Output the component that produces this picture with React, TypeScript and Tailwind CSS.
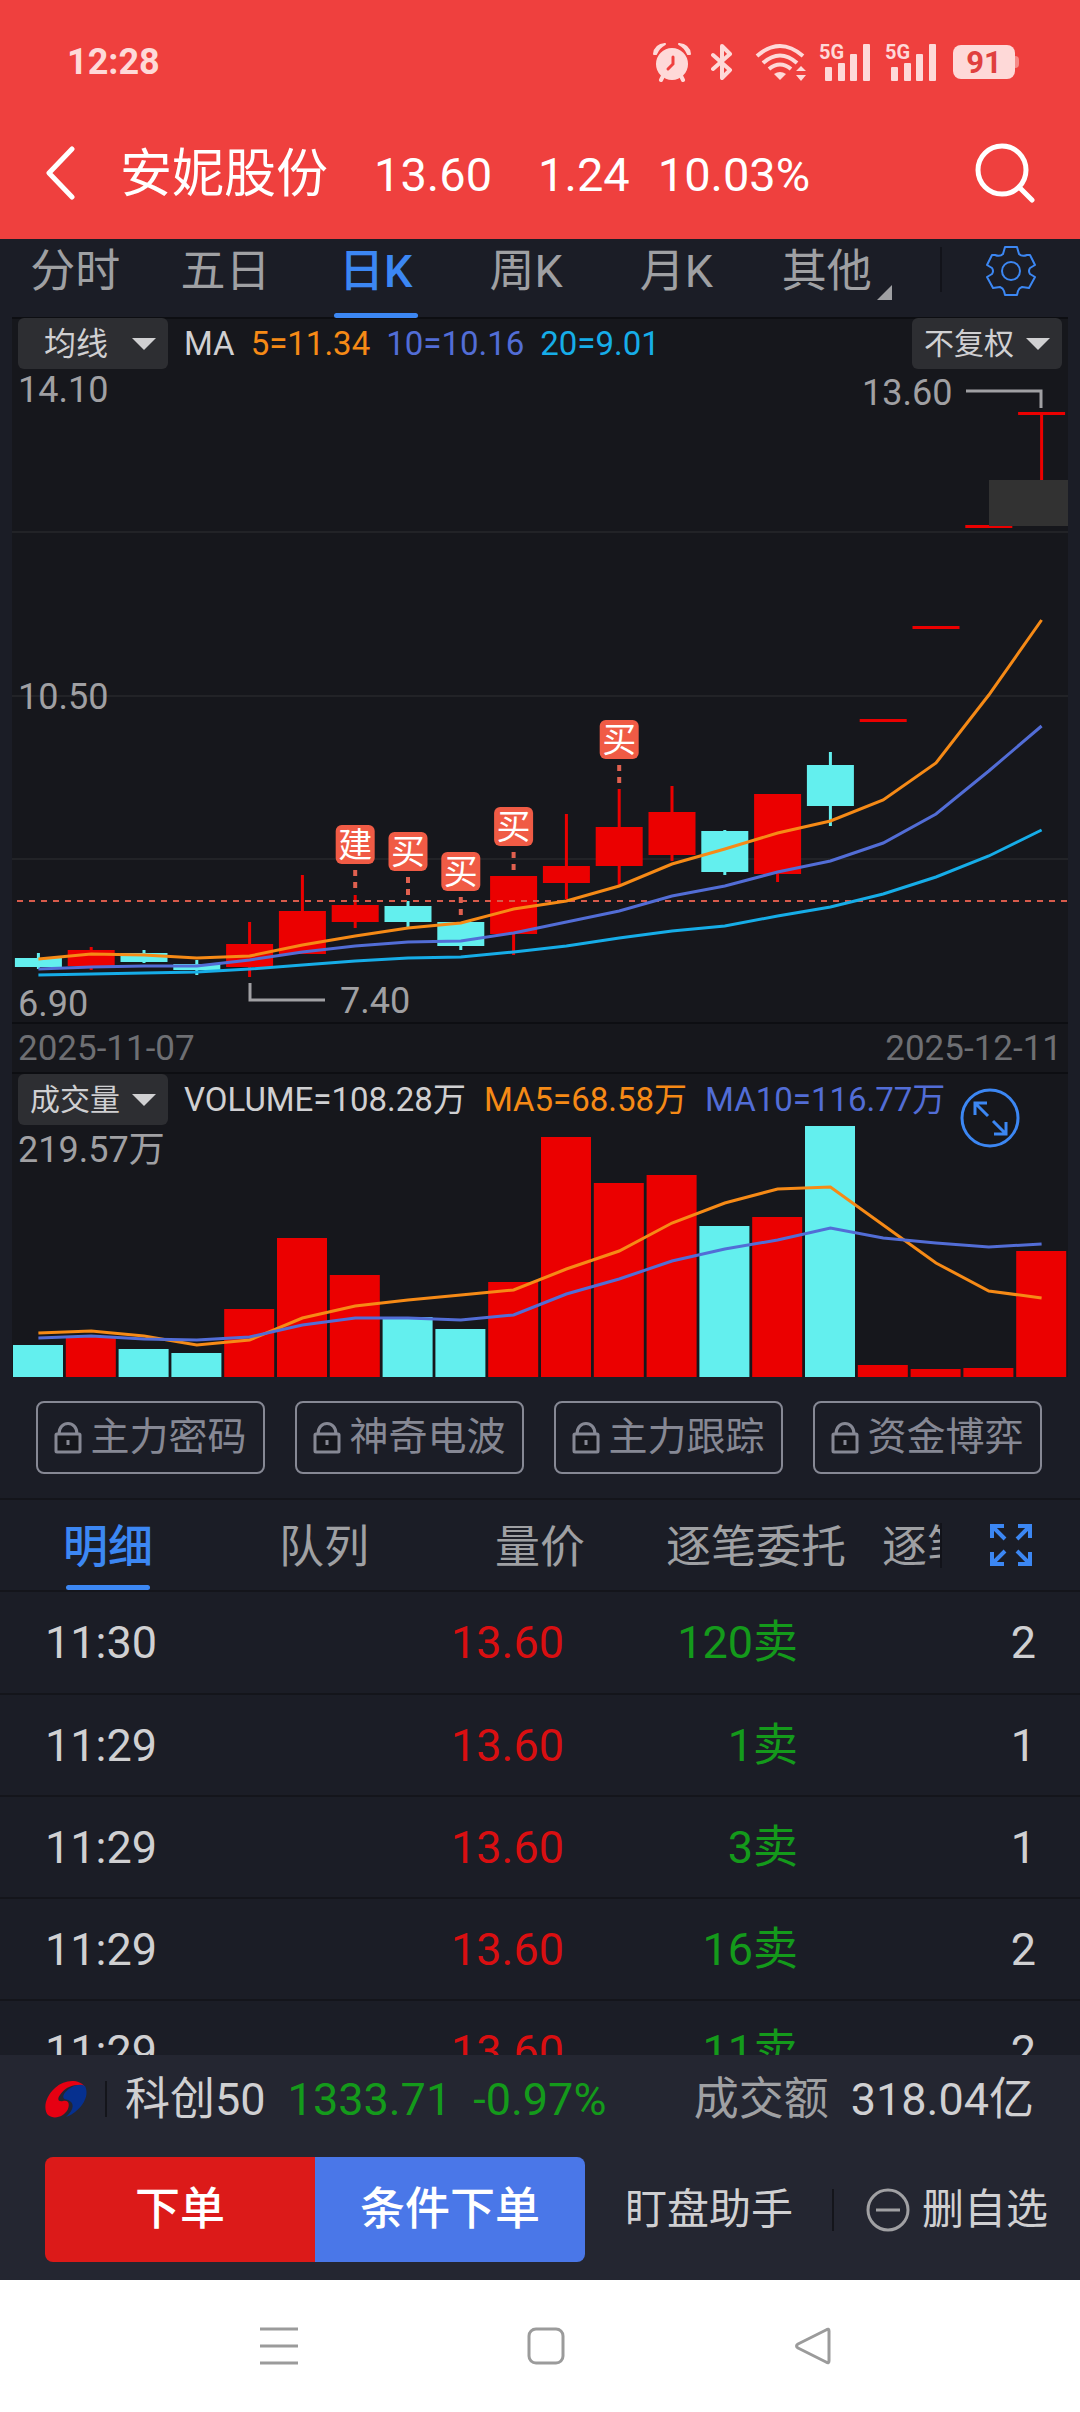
import React from 'react'

const UP = '#eb0000'
const DOWN = '#63efee'

const CHART_WIDTH = 1056
const STEP = CHART_WIDTH / 20
const centerX = (i: number) => STEP * i + STEP / 2

// body edges and wick ends in chart units, plus direction
type Candle = { top: number; bottom: number; high: number; low: number; up: boolean }

const candles: Candle[] = [
  { top: 589, bottom: 598, high: 584, low: 600, up: false },
  { top: 581, bottom: 597, high: 578, low: 601, up: true },
  { top: 584, bottom: 593, high: 581, low: 594, up: false },
  { top: 595, bottom: 601, high: 591, low: 606, up: false },
  { top: 575, bottom: 598, high: 553, low: 608, up: true },
  { top: 542, bottom: 585, high: 506, low: 585, up: true },
  { top: 536, bottom: 553, high: 526, low: 559, up: true },
  { top: 537, bottom: 553, high: 532, low: 558, up: false },
  { top: 553, bottom: 577, high: 553, low: 581, up: false },
  { top: 507, bottom: 565, high: 507, low: 586, up: true },
  { top: 497, bottom: 514, high: 445, low: 530, up: true },
  { top: 458, bottom: 497, high: 420, low: 517, up: true },
  { top: 443, bottom: 486, high: 417, low: 492, up: true },
  { top: 462, bottom: 503, high: 461, low: 506, up: false },
  { top: 425, bottom: 505, high: 425, low: 513, up: true },
  { top: 396, bottom: 437, high: 383, low: 457, up: false },
  { top: 350, bottom: 353, high: 350, low: 353, up: true },
  { top: 257, bottom: 260, high: 257, low: 260, up: true },
  { top: 156, bottom: 159, high: 156, low: 159, up: true },
  { top: 43, bottom: 46, high: 43, low: 112, up: true },
]

const priceLines = [
  { color: '#f68a16', values: [590, 585, 586, 589, 587, 576, 567, 559, 554, 540, 532, 517, 495, 480, 464, 452, 431, 394, 326, 251] },
  { color: '#526dd6', values: [600, 598, 597, 597, 591, 583, 577, 573, 572, 564, 553, 542, 527, 517, 503, 492, 474, 445, 402, 357] },
  { color: '#16ade8', values: [606, 605, 604, 603, 600, 596, 592, 589, 588, 583, 577, 569, 562, 557, 547, 538, 525, 508, 487, 461] },
]

const marks = [
  { index: 6, y: 456, label: '建' },
  { index: 7, y: 463, label: '买' },
  { index: 8, y: 483, label: '买' },
  { index: 9, y: 438, label: '买' },
  { index: 11, y: 351, label: '买' },
]

const volumeTops = [220, 211, 224, 228, 184, 113, 150, 192, 204, 157, 12, 58, 50, 101, 92, 1, 240, 244, 243, 126]

const volumeLines = [
  { color: '#f68a16', values: [208, 206, 211, 220, 215, 193, 181, 175, 170, 165, 144, 126, 98, 78, 64, 62, 100, 138, 166, 173] },
  { color: '#526dd6', values: [213, 211, 214, 215, 212, 200, 193, 193, 195, 190, 169, 154, 136, 124, 115, 103, 113, 118, 122, 119] },
]

const toPoints = (values: number[]) => values.map((v, i) => `${centerX(i)},${v}`).join(' ')

const trades = [
  { time: '11:30', price: '13.60', volume: '120卖', count: 2 },
  { time: '11:29', price: '13.60', volume: '1卖', count: 1 },
  { time: '11:29', price: '13.60', volume: '3卖', count: 1 },
  { time: '11:29', price: '13.60', volume: '16卖', count: 2 },
  { time: '11:29', price: '13.60', volume: '11卖', count: 2 },
]

const SignalIcon = () => (
  <svg viewBox="0 0 52 38" className="w-[52px] h-[38px] overflow-visible" fill="currentColor">
    <text x="0" y="16" fontSize="20" fontWeight="700">5G</text>
    <rect x="6" y="24" width="7" height="14" rx="1" />
    <rect x="19" y="20" width="7" height="18" rx="1" />
    <rect x="31" y="11" width="7" height="27" rx="1" />
    <rect x="44" y="1" width="7" height="37" rx="1" />
  </svg>
)

const StatusBar = () => (
  <div className="h-[124px] pl-[67px] pr-[61px] flex items-center justify-between text-[#fed9d8]">
    <span className="text-[36px] leading-none font-bold">12:28</span>
    <div className="flex items-center">
      <svg viewBox="0 0 38 39" className="w-[38px] h-[39px]" fill="currentColor">
        <circle cx="19" cy="21" r="16" />
        <path d="M1 11 Q2 2 12 1 Q6 4 3 11 Z" stroke="currentColor" strokeWidth="2" strokeLinejoin="round" />
        <path d="M37 11 Q36 2 26 1 Q32 4 35 11 Z" stroke="currentColor" strokeWidth="2" strokeLinejoin="round" />
        <path d="M10 33 L8 37 M28 33 L30 37" stroke="currentColor" strokeWidth="4" strokeLinecap="round" />
        <path d="M20 14 V21 L15 26" stroke="#ef403e" strokeWidth="3" fill="none" strokeLinecap="round" />
      </svg>
      <svg viewBox="0 0 22 38" className="ml-[20px] w-[22px] h-[38px]" fill="none" stroke="currentColor" strokeWidth="4" strokeLinejoin="round" strokeLinecap="round">
        <path d="M2 12 L19 27 L11 35 V3 L19 11 L2 26" />
      </svg>
      <svg viewBox="0 0 52 38" className="ml-[22px] w-[52px] h-[38px]" fill="none" stroke="currentColor" strokeWidth="4">
        <path d="M2 13 Q25 -7 48 13" />
        <path d="M8 20 Q25 5 42 20" />
        <path d="M14 26 Q25 17 36 26" />
        <path d="M19 31 Q25 27 31 31 L25 37 Z" fill="currentColor" stroke="none" />
        <path d="M41 28 L46 23 L51 28 Z M41 32 L46 38 L51 32 Z" fill="currentColor" stroke="none" />
      </svg>
      <span className="ml-3"><SignalIcon /></span>
      <span className="ml-[14px]"><SignalIcon /></span>
      <span className="ml-4 w-[62px] h-[34px] rounded-lg bg-[#fed9d8] text-[#e0403e] text-[31px] leading-none font-bold flex items-center justify-center">91</span>
      <span className="w-1 h-3 rounded-r bg-[#f58a88]" />
    </div>
  </div>
)

const Header = () => (
  <header className="bg-[#ef403e]">
    <StatusBar />
    <div className="h-[115px] pb-[18px] px-[45px] flex items-center text-white">
      <button aria-label="返回">
        <svg viewBox="0 0 30 54" className="w-[30px] h-[54px]" fill="none" stroke="currentColor" strokeWidth="5" strokeLinecap="round" strokeLinejoin="round">
          <path d="M27 3 L4 27 L27 51" />
        </svg>
      </button>
      <h1 className="ml-[45px] mt-1 text-[52px] leading-none">安妮股份</h1>
      <div className="ml-[46px] mt-1 flex text-[47px] leading-none">
        <span>13.60</span>
        <span className="ml-[46px]">1.24</span>
        <span className="ml-7">10.03%</span>
      </div>
      <button aria-label="搜索" className="ml-auto">
        <svg viewBox="0 0 60 60" className="w-[60px] h-[60px]" fill="none" stroke="currentColor" strokeWidth="5" strokeLinecap="round">
          <circle cx="27" cy="27" r="24" />
          <path d="M44 44 L57 57" />
        </svg>
      </button>
    </div>
  </header>
)

const periods = ['分时', '五日', '日K', '周K', '月K', '其他']

const PeriodTabs = () => (
  <nav className="h-[79px] flex text-[45px] leading-none text-[#9fa0a3]">
    <div className="flex-1 grid grid-cols-6">
      {periods.map((name) => (
        <button
          key={name}
          className={name === '日K' ? 'relative pb-[14px] text-[#3c87f3] font-medium' : 'relative pb-[14px]'}
        >
          {name}
          {name === '日K' && <span className="absolute bottom-0 left-1/2 -ml-[42px] w-[84px] h-[5px] rounded-sm bg-[#3c87f3]" />}
          {name === '其他' && (
            <svg viewBox="0 0 15 15" className="absolute right-[10px] bottom-[18px] w-[15px] h-[15px]" fill="currentColor">
              <path d="M15 0 V15 H0 Z" />
            </svg>
          )}
        </button>
      ))}
    </div>
    <span className="ml-[38px] mt-2 w-[2px] h-[45px] bg-[#12131a]" />
    <button aria-label="设置" className="ml-11 mr-11 mt-[7px] self-start text-[#3c87f3]">
      <svg viewBox="0 0 50 50" className="w-[50px] h-[50px]" fill="none" stroke="currentColor" strokeWidth="2" strokeLinejoin="round">
        <path d="M19 1 H31 L33 8 Q36 11 41 9 L44 9 L49 19 L44 22 Q42 25 44 28 L49 31 L43 42 L36 41 Q33 42 32 45 L31 49 H19 L18 45 Q17 42 14 41 L7 42 L1 31 L6 28 Q8 25 6 22 L1 19 L6 9 L9 9 Q14 11 17 8 Z" />
        <circle cx="25" cy="25" r="9" />
      </svg>
    </button>
  </nav>
)

const PickerButton = ({ label, large = false }: { label: string; large?: boolean }) => (
  <button className="w-[150px] h-[51px] shrink-0 rounded-md bg-[#2d2e32] text-[#d0d0d2] flex items-center justify-end pr-3">
    <span className={large ? 'text-[32px] leading-none' : 'text-[30px] leading-none'}>{label}</span>
    <svg viewBox="0 0 24 12" className={large ? 'ml-6 w-6 h-3' : 'ml-3 w-6 h-3'} fill="currentColor">
      <path d="M0 0 H24 L12 12 Z" />
    </svg>
  </button>
)

const PriceChart = () => (
  <svg viewBox="0 0 1056 653" className="block w-full h-auto overflow-visible">
    <g stroke="#222327" strokeWidth="2">
      <path d="M0 163 H1056 M0 327 H1056 M0 490 H1056" />
    </g>
    {candles.map((c, i) => (
      <g key={i} fill={c.up ? UP : DOWN}>
        <rect x={centerX(i) - 1.5} y={c.high} width="3" height={c.low - c.high} />
        <rect x={centerX(i) - 23.5} y={c.top} width="47" height={c.bottom - c.top} />
      </g>
    ))}
    {/* gap zone under the latest candle */}
    <rect x="977" y="111" width="79" height="46" fill="#323232" />
    <path d="M5 532 H1056" stroke="#d95b4b" strokeWidth="2" strokeDasharray="6 6" />
    {priceLines.map((line) => (
      <polyline key={line.color} points={toPoints(line.values)} fill="none" stroke={line.color} strokeWidth="3" />
    ))}
    {marks.map((m) => (
      <g key={m.index}>
        <rect x={centerX(m.index) - 19.5} y={m.y} width="39" height="39" rx="6" fill="#f05b45" />
        <text x={centerX(m.index)} y={m.y + 32} textAnchor="middle" fontSize="34" fill="#fff">{m.label}</text>
        <path d={`M${centerX(m.index)} ${m.y + 45} v20`} stroke="#e0604f" strokeWidth="4" strokeDasharray="6 6" />
      </g>
    ))}
    <g fill="none" stroke="#a0a0a3" strokeWidth="3">
      <path d="M954 22 H1029 V39" />
      <path d="M238 614 V631 H313" />
    </g>
    <g fill="#a0a0a3" fontSize="36">
      <text x="6" y="33">14.10</text>
      <text x="6" y="340">10.50</text>
      <text x="6" y="647">6.90</text>
      <text x="850" y="36">13.60</text>
      <text x="328" y="644">7.40</text>
    </g>
  </svg>
)

const VolumeChart = () => (
  <svg viewBox="0 0 1056 252" className="block w-full h-auto">
    <text x="6" y="37" fontSize="36" fill="#a0a0a3">219.57万</text>
    {volumeTops.map((top, i) => (
      <rect key={i} x={STEP * i + 1} y={top} width="50" height={252 - top} fill={candles[i].up ? UP : DOWN} />
    ))}
    {volumeLines.map((line) => (
      <polyline key={line.color} points={toPoints(line.values)} fill="none" stroke={line.color} strokeWidth="3" />
    ))}
  </svg>
)

const ChartPanel = () => (
  <section className="mx-3 bg-[#16171c] border-t-2 border-[#0d0e12] -mt-px text-[33px] leading-none">
    <div className="-mt-px flex items-center px-[6px]">
      <PickerButton label="均线" large />
      <div className="ml-4 flex gap-4">
        <span className="text-[#d0d0d2]">MA</span>
        <span className="text-[#f68a16]">5=11.34</span>
        <span className="text-[#526dd6]">10=10.16</span>
        <span className="text-[#16ade8]">20=9.01</span>
      </div>
      <div className="ml-auto">
        <PickerButton label="不复权" />
      </div>
    </div>
    <PriceChart />
    <div className="h-[52px] px-[6px] border-y-2 border-[#0d0e12] flex items-center justify-between text-[35px] text-[#6e6f73]">
      <span>2025-11-07</span>
      <span>2025-12-11</span>
    </div>
    <div className="relative flex items-center px-[6px]">
      <PickerButton label="成交量" />
      <div className="ml-4 flex gap-[18px] whitespace-nowrap">
        <span className="text-[#d0d0d2]">VOLUME=108.28万</span>
        <span className="text-[#f68a16]">MA5=68.58万</span>
        <span className="text-[#526dd6]">MA10=116.77万</span>
      </div>
      <button aria-label="展开" className="absolute right-12 top-[14px] text-[#3c87f3]">
        <svg viewBox="0 0 60 60" className="w-[60px] h-[60px]" fill="none" stroke="currentColor" strokeWidth="3">
          <circle cx="30" cy="30" r="28" />
          <path d="M15 27 V15 H27 M15 15 L28 28 M33 33 L46 46 M46 34 V46 H34" />
        </svg>
      </button>
    </div>
    <VolumeChart />
  </section>
)

const LockedButton = ({ label }: { label: string }) => (
  <button className="h-[73px] rounded-lg border-2 border-[#868894] text-[#868894] text-[39px] leading-none flex items-center justify-center gap-2 whitespace-nowrap">
    <svg viewBox="0 0 28 32" className="w-7 h-8" fill="none" stroke="currentColor" strokeWidth="3">
      <path d="M5 12 C5 -2 23 -2 23 12" />
      <rect x="2" y="12" width="24" height="18" rx="1" fill="#15161b" />
      <path d="M14 18 V23" />
    </svg>
    {label}
  </button>
)

const details = ['明细', '队列', '量价', '逐笔委托', '逐笔成交']

const DetailTabs = () => (
  <nav className="h-[94px] shrink-0 border-y-2 border-[#14151b] flex items-center text-[45px] leading-none text-[#9fa0a3]">
    <div className="flex-1 self-stretch flex overflow-hidden">
      {details.map((name, i) => (
        <button
          key={name}
          className={
            i === 0
              ? 'relative w-[216px] pt-1 shrink-0 text-[#3c87f3] font-medium'
              : 'w-[216px] pt-1 shrink-0 whitespace-nowrap'
          }
        >
          {name}
          {i === 0 && <span className="absolute bottom-0 left-1/2 -ml-[42px] w-[84px] h-[5px] rounded-sm bg-[#3c87f3]" />}
        </button>
      ))}
    </div>
    <span className="w-[2px] h-[45px] bg-[#12131a]" />
    <button aria-label="全屏" className="mx-[47px] text-[#3c87f3]">
      <svg viewBox="0 0 44 44" className="w-11 h-11" fill="none" stroke="currentColor" strokeWidth="4">
        <path d="M3 15 V3 H15 M3 3 L16 16" />
        <path d="M29 3 H41 V15 M41 3 L28 16" />
        <path d="M3 29 V41 H15 M3 41 L16 28" />
        <path d="M29 41 H41 V29 M41 41 L28 28" />
      </svg>
    </button>
  </nav>
)

const TradeList = () => (
  <div className="flex-1 min-h-0 overflow-hidden">
    <table className="w-full table-fixed text-[45px] leading-none">
      <tbody>
        {trades.map((t, i) => (
          <tr key={i} className="h-[102px] border-b-2 border-[#14151b]">
            <td className="pl-[45px] text-[#d0d0d2]">{t.time}</td>
            <td className="w-[324px] text-right text-[#d90f11]">{t.price}</td>
            <td className="w-[234px] text-right text-[#149a1b]">{t.volume}</td>
            <td className="w-[282px] pr-11 text-right text-[#d0d0d2]">{t.count}</td>
          </tr>
        ))}
      </tbody>
    </table>
  </div>
)

const Footer = () => (
  <footer className="h-[225px] shrink-0 bg-[#242631] text-[45px] leading-none text-[#d0d0d2]">
    <div className="h-[84px] pt-1 pl-[45px] pr-[46px] flex items-center whitespace-nowrap">
      <svg viewBox="0 0 42 38" className="w-[42px] h-[38px]">
        <path d="M40 7 C34 -1 20 -1 10 8 C0 17 -2 29 3 35 C9 40 19 37 23 29 C25 23 23 20 18 21 C13 22 12 19 15 15 C20 7 31 2 40 7 Z" fill="#e60012" />
        <path d="M40 6 C33 2 23 8 19 14 C17 18 19 19 23 20 C30 23 29 30 21 37 C33 33 46 18 40 6 Z" fill="#06308f" />
      </svg>
      <span className="ml-[18px] w-[2px] h-9 bg-[#14151b]" />
      <span className="ml-[18px]">科创50</span>
      <span className="ml-[22px] text-[#149a1b]">1333.71</span>
      <span className="ml-[22px] text-[#149a1b]">-0.97%</span>
      <span className="ml-auto text-[#9fa0a3]">成交额</span>
      <span className="ml-[22px]">318.04亿</span>
    </div>
    <div className="mt-[18px] pr-8 flex items-center whitespace-nowrap">
      <div className="ml-[45px] w-[50vw] h-[105px] shrink-0 flex rounded-lg overflow-hidden text-white font-medium">
        <button className="flex-1 bg-[#dc1a19]">下单</button>
        <button className="flex-1 bg-[#4a77e8]">条件下单</button>
      </div>
      <button className="ml-10 text-[42px]">盯盘助手</button>
      <span className="ml-[39px] w-[2px] h-[42px] bg-[#14151b]" />
      <button className="ml-auto flex items-center gap-3 text-[42px]">
        <svg viewBox="0 0 44 44" className="w-11 h-11" fill="none" stroke="#a0a0a3" strokeWidth="3">
          <circle cx="22" cy="22" r="20" />
          <path d="M10 22 H34" />
        </svg>
        删自选
      </button>
    </div>
  </footer>
)

const SystemNav = () => (
  <div className="h-[132px] shrink-0 bg-white flex items-center justify-center gap-[229px] pl-3 text-[#9b9b9b]">
    <button aria-label="菜单">
      <svg viewBox="0 0 38 38" className="w-[38px] h-[38px]" stroke="currentColor" strokeWidth="3">
        <path d="M0 2 H38 M0 19 H38 M0 36 H38" />
      </svg>
    </button>
    <button aria-label="主页">
      <svg viewBox="0 0 38 38" className="w-[38px] h-[38px]" fill="none" stroke="currentColor" strokeWidth="3">
        <rect x="2" y="2" width="34" height="34" rx="7" />
      </svg>
    </button>
    <button aria-label="后退">
      <svg viewBox="0 0 38 38" className="w-[38px] h-[38px]" fill="none" stroke="currentColor" strokeWidth="3" strokeLinejoin="round">
        <path d="M35 4 V34 Q35 37 32 35 L4 21 Q1 19 4 17 L32 3 Q35 1 35 4 Z" />
      </svg>
    </button>
  </div>
)

export default function App() {
  return (
    <div className="h-screen flex flex-col bg-[#1b1d26] font-[Roboto,'Noto_Sans_CJK_SC',sans-serif]">
      <Header />
      <PeriodTabs />
      <ChartPanel />
      <div className="mt-6 mb-6 pl-9 pr-[38px] grid grid-cols-4 gap-[30px]">
        <LockedButton label="主力密码" />
        <LockedButton label="神奇电波" />
        <LockedButton label="主力跟踪" />
        <LockedButton label="资金博弈" />
      </div>
      <DetailTabs />
      <TradeList />
      <Footer />
      <SystemNav />
    </div>
  )
}
